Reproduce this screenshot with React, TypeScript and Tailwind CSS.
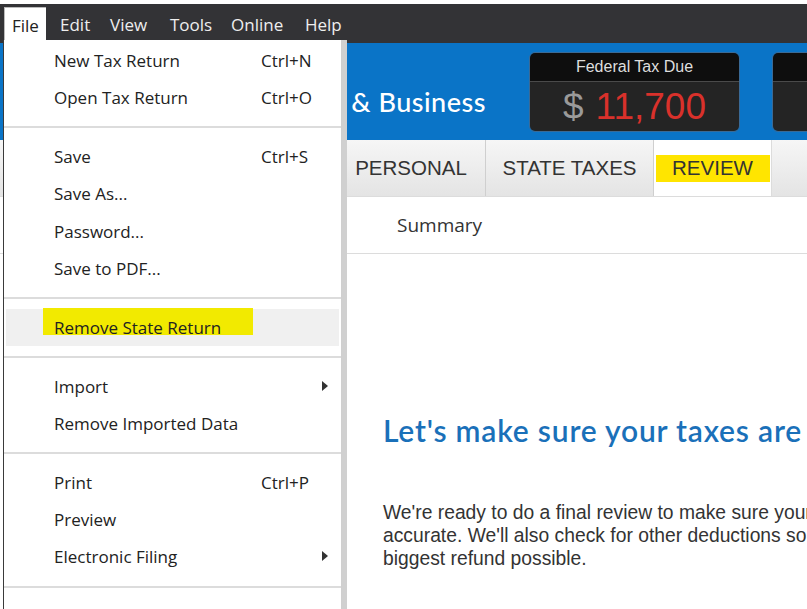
import React from "react";

const sans = { fontFamily: '"Open Sans", "Noto Sans", sans-serif' };

type Item = { label: string; shortcut?: string; sub?: boolean; hover?: boolean };

const GROUPS: Item[][] = [
  [
    { label: "New Tax Return", shortcut: "Ctrl+N" },
    { label: "Open Tax Return", shortcut: "Ctrl+O" },
  ],
  [
    { label: "Save", shortcut: "Ctrl+S" },
    { label: "Save As..." },
    { label: "Password..." },
    { label: "Save to PDF..." },
  ],
  [{ label: "Remove State Return", hover: true }],
  [{ label: "Import", sub: true }, { label: "Remove Imported Data" }],
  [
    { label: "Print", shortcut: "Ctrl+P" },
    { label: "Preview" },
    { label: "Electronic Filing", sub: true },
  ],
];

function TaxBox({ title, amount }: { title: string; amount?: string }) {
  return (
    <div className="flex h-[80px] w-[211px] shrink-0 flex-col overflow-hidden rounded-[6px] border border-[#3a6a96] font-['Liberation_Sans',Arial,sans-serif]">
      <div className="flex h-[29px] items-center justify-center border-b border-[#4a4a4a] bg-[#0e0e0e] text-[16px] text-[#dedede]">
        {title}
      </div>
      <div className="flex flex-1 items-center justify-center gap-[12px] bg-[#242424] text-[37px] leading-none">
        {amount && (
          <>
            <span className="text-[#9a9a9a]">$</span>
            <span className="text-[#d9312b]">{amount}</span>
          </>
        )}
      </div>
    </div>
  );
}

function Menu() {
  return (
    <div className="absolute left-[3px] top-[40px] flex h-[580px] w-[345px]">
      <div className="w-[339px] border-l border-r border-l-[#3a3a3a] border-r-[#cfcfcf] bg-white pt-[2px] text-[17px] text-[#222]" style={sans}>
        {GROUPS.map((g, gi) => (
          <div key={gi}>
            {g.map((it) => (
              <div
                key={it.label}
                className={`relative flex h-[37.4px] items-center ${it.hover ? "mx-[2px] bg-[#f0f0f0]" : ""}`}
              >
                {it.hover && <div className="absolute left-[37px] top-[-1px] h-[27px] w-[210px] bg-[#f2ea00]" />}
                <span className={`relative ${it.hover ? "pl-[48px]" : "pl-[50px]"}`}>{it.label}</span>
                {it.shortcut && <span className="absolute left-[257px]">{it.shortcut}</span>}
                {it.sub && (
                  <span className="absolute left-[318px] top-[13px] h-0 w-0 border-y-[5px] border-l-[6px] border-y-transparent border-l-[#333]" />
                )}
              </div>
            ))}
            <div className="flex h-[21.3px] items-center">
              <div className="h-[2px] w-full bg-[#dcdcdc]" />
            </div>
          </div>
        ))}
      </div>
      <div className="w-[5px] bg-[#d0d0d0]" />
    </div>
  );
}

export default function App() {
  const bar = [
    { t: "File", w: "w-[49px]" },
    { t: "Edit", w: "w-[50px]" },
    { t: "View", w: "w-[60px]" },
    { t: "Tools", w: "w-[61px]" },
    { t: "Online", w: "w-[74px]" },
    { t: "Help", w: "w-[60px]" },
  ];
  return (
    <div className="relative h-[609px] w-[807px] overflow-hidden bg-white">
      <div className="h-[4px] bg-white" />
      {/* menu bar */}
      <div className="flex h-[39px] items-end bg-[#333336] pl-[4px] text-[17px] text-[#eeeeee]" style={sans}>
        {bar.map((b, i) => (
          <div key={b.t} className={`${b.w} h-[36px]`}>
            <div className={`flex h-full items-center px-[7px] ${i === 0 ? "w-[42px] border-l border-t border-[#bbb] bg-white text-[#222]" : ""}`}>
              {b.t}
            </div>
          </div>
        ))}
      </div>

      {/* blue header */}
      <div className="flex h-[97px] items-center bg-[#0a74c7]">
        <div className="mt-[22px] w-[486px] shrink-0 whitespace-nowrap text-right font-['Lato',sans-serif] text-[27px] font-medium tracking-[0.5px] text-white">
          H&amp;R Block Premium &amp; Business
        </div>
        <div className="ml-[43px] flex gap-[32px]">
          <TaxBox title="Federal Tax Due" amount="11,700" />
          <TaxBox title="State Tax Due" />
        </div>
      </div>

      {/* tabs */}
      <div className="flex h-[57px] border-b border-[#dcdcdc] bg-linear-to-b from-[#f6f6f6] to-[#e4e4e4] font-['Liberation_Sans',Arial,sans-serif] text-[20.5px] text-[#333]">
        <div className="w-[337px] shrink-0 border-r border-[#cfcfcf]" />
        <div className="flex w-[149px] items-center justify-center border-r border-[#cfcfcf]">PERSONAL</div>
        <div className="flex w-[168px] items-center justify-center border-r border-[#cfcfcf]">STATE TAXES</div>
        <div className="flex w-[118px] items-center justify-center border-r border-[#dcdcdc] bg-white">
          <span className="flex h-[27px] w-[114px] items-center justify-center bg-[#ffe500]">REVIEW</span>
        </div>
        <div className="flex-1" />
      </div>

      {/* sub nav */}
      <div className="flex h-[57px] items-center border-b border-[#dcdcdc] pl-[397px] text-[19px] text-[#333]" style={sans}>
        Summary
      </div>

      {/* content */}
      <div className="pl-[383px]">
        <h1 className="mt-[158px] whitespace-nowrap font-['Lato',sans-serif] text-[30px] font-semibold leading-[36px] tracking-[0.8px] text-[#1a70b9]">
          Let's make sure your taxes are accurate
        </h1>
        <p className="mt-[53px] whitespace-nowrap font-['Liberation_Sans',Arial,sans-serif] text-[19.3px] leading-[23px] text-[#333]">
          We're ready to do a final review to make sure your taxes are
          <br />
          accurate. We'll also check for other deductions so you get the
          <br />
          biggest refund possible.
        </p>
      </div>

      <Menu />
    </div>
  );
}
